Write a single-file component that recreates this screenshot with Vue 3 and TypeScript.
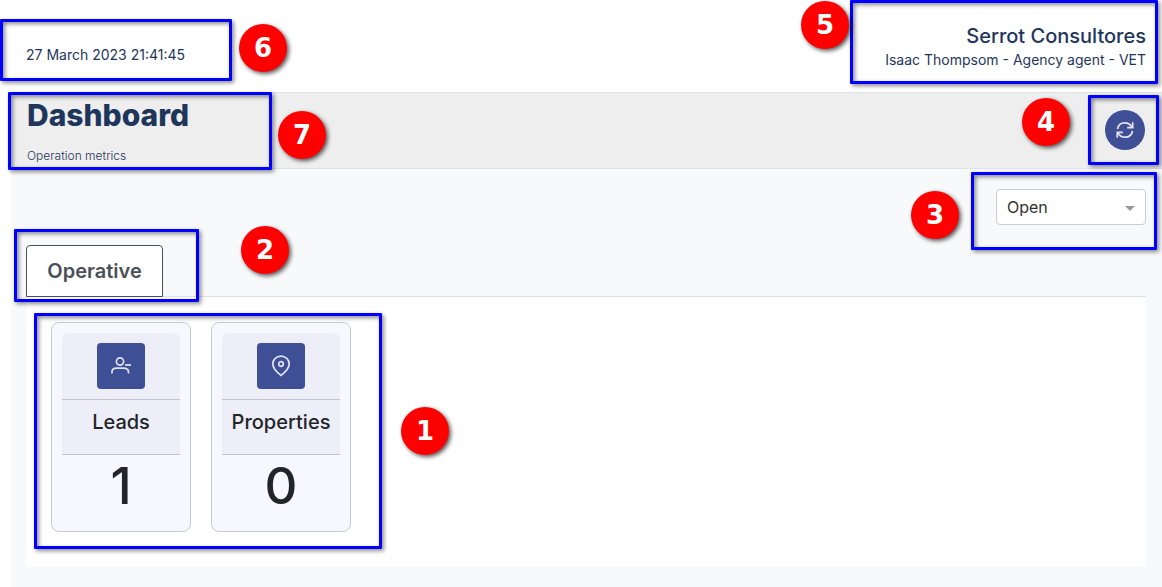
<script setup lang="ts">
import { ref } from 'vue'

interface Metric {
  id: string
  label: string
  value: number
}

const metrics: Metric[] = [
  { id: 'leads', label: 'Leads', value: 1 },
  { id: 'properties', label: 'Properties', value: 0 },
]

const status = ref('open')
</script>

<template>
  <div class="page">
    <header class="topbar">
      <time class="clock" datetime="2023-03-27T21:41:45">27 March 2023 21:41:45</time>
      <div class="account">
        <div class="agency">Serrot Consultores</div>
        <div class="agent">Isaac Thompsom - Agency agent - VET</div>
      </div>
      <div class="frame frame-clock"></div>
      <span class="badge badge-clock">6</span>
      <div class="frame frame-account"></div>
      <span class="badge badge-account">5</span>
    </header>

    <main class="content">
      <section class="hero">
        <div>
          <h1>Dashboard</h1>
          <p>Operation metrics</p>
        </div>
        <button class="refresh" type="button" aria-label="Refresh">
          <svg width="20" height="20" viewBox="0 0 20 20" fill="none" stroke="currentColor" stroke-width="1.7">
            <path d="M2.5 9C3.2 5 6.2 2.8 9.8 2.8C13 2.8 15.5 4.3 17 7.2" />
            <path d="M17.7 2.2V7.7H12.2" />
            <path d="M17.5 11C16.8 15 13.8 17.2 10.2 17.2C7 17.2 4.5 15.7 3 12.8" />
            <path d="M2.3 17.8V12.3H7.8" />
          </svg>
        </button>
        <div class="frame frame-hero"></div>
        <span class="badge badge-hero">7</span>
        <div class="frame frame-refresh"></div>
        <span class="badge badge-refresh">4</span>
      </section>

      <section class="filters">
        <div class="picker">
          <select v-model="status" aria-label="Status">
            <option value="open">Open</option>
            <option value="closed">Closed</option>
          </select>
        </div>
        <div class="frame frame-filter"></div>
        <span class="badge badge-filter">3</span>
      </section>

      <section class="board">
        <nav class="tabs" role="tablist">
          <button class="tab" type="button" role="tab" aria-selected="true">Operative</button>
          <div class="frame frame-tab"></div>
          <span class="badge badge-tab">2</span>
        </nav>
        <div class="panel" role="tabpanel">
          <article v-for="metric in metrics" :key="metric.id" class="card">
            <div class="card-icon">
              <span class="tile">
                <svg v-if="metric.id === 'leads'" width="22" height="20" viewBox="0 0 22 20" fill="none" stroke="currentColor" stroke-width="1.7">
                  <circle cx="10" cy="5.5" r="3.6" />
                  <path d="M2 17.5V16C2 13.3 4.1 12.2 6.3 12.2H13.2C16 12.2 18.5 13.5 18.500 16V17.500" />
                  <path d="M15 9H21" />
                </svg>
                <svg v-else width="20" height="22" viewBox="0 0 20 22" fill="none" stroke="currentColor" stroke-width="1.7">
                  <path d="M10 20.5C7.5 18.5 1.8 14 1.8 9A8.2 7.8 0 0 1 18.2 9C18.2 14 12.5 18.5 10 20.5Z" />
                  <circle cx="10" cy="9" r="2.3" />
                </svg>
              </span>
            </div>
            <h2>{{ metric.label }}</h2>
            <div class="value">{{ metric.value }}</div>
          </article>
          <div class="frame frame-cards"></div>
          <span class="badge badge-cards">1</span>
        </div>
      </section>
    </main>
  </div>
</template>

<style>
body {
  margin: 0;
  background: #fff;
}
</style>

<style scoped>
.page {
  min-height: 100vh;
  display: flex;
  flex-direction: column;
  overflow: hidden;
  font-family: Inter, "Liberation Sans", sans-serif;
  color: #212529;
}
.page, .page * {
  box-sizing: border-box;
}
.topbar {
  position: relative;
  display: flex;
  justify-content: space-between;
  align-items: flex-end;
  min-height: 92px;
  padding: 22px 16px 22px 26px;
  color: #1f365c;
  font-size: 14px;
  line-height: 20px;
}
.clock {
  padding-bottom: 5px;
}
.account {
  text-align: right;
}
.agency {
  font-size: 20px;
  line-height: 28px;
  font-weight: 500;
}
.content {
  flex: 1;
  margin-left: 11px;
  background: #f8f9fb;
}
.hero {
  position: relative;
  display: flex;
  justify-content: space-between;
  align-items: flex-start;
  padding: 0 17px 0 16px;
  min-height: 77px;
  background: #eee;
  border-top: 1px solid #dee2e6;
  border-bottom: 1px solid #dee2e6;
  color: #1f365c;
}
h1 {
  margin: 0;
  font-size: 30px;
  line-height: 44px;
  font-weight: 800;
}
.hero p {
  margin: 9px 0 0;
  font-size: 12px;
  line-height: 20px;
  font-weight: 300;
  color: #1f365c;
}
.refresh {
  display: flex;
  align-items: center;
  justify-content: center;
  width: 40px;
  height: 40px;
  margin-top: 17px;
  padding: 0;
  border: 0;
  border-radius: 50%;
  background: #3f4f95;
  color: #e4e6f2;
}
.filters {
  position: relative;
  display: flex;
  justify-content: flex-end;
  padding: 20px 16px;
}
.picker {
  position: relative;
  width: 150px;
}
.picker::after {
  content: "";
  position: absolute;
  top: 17px;
  right: 11px;
  border: 5px solid transparent;
  border-top-color: #999;
  border-bottom: 0;
  pointer-events: none;
}
.picker select {
  display: block;
  width: 100%;
  height: 36px;
  padding: 0 10px;
  appearance: none;
  border: 1px solid #ccc;
  border-radius: 4px;
  background: #fff;
  color: #333;
  font: 400 16px Inter, "Liberation Sans", sans-serif;
}
.board {
  padding: 0 16px 20px 15px;
}
.tabs {
  position: relative;
  display: flex;
  height: 52px;
  border-bottom: 1px solid #dee2e6;
}
.tab {
  min-width: 137px;
  height: 52px;
  padding: 0 20px;
  border: 1px solid #495057;
  border-radius: 4px 4px 0 0;
  background: #fff;
  color: #495057;
  font: 600 20px Inter, "Liberation Sans", sans-serif;
}
.panel {
  position: relative;
  display: flex;
  gap: 20px;
  align-items: flex-start;
  min-height: 270px;
  padding: 25px;
  background: #fff;
}
.card {
  width: 140px;
  min-height: 210px;
  padding: 10px;
  border: 1px solid #c9c9d3;
  border-radius: 8px;
  background: #f6f7ff;
  text-align: center;
}
.card-icon {
  display: flex;
  justify-content: center;
  padding: 10px 0;
  border-radius: 6px 6px 0 0;
  border-bottom: 1px solid #c4c4cc;
  background: #eeeef8;
}
.tile {
  display: flex;
  align-items: center;
  justify-content: center;
  width: 48px;
  height: 46px;
  border-radius: 4px;
  background: #3f4f95;
  color: #dfe2f1;
}
.card h2 {
  margin: 0;
  padding: 10px 0 20px;
  border-bottom: 1px solid #c4c4cc;
  background: #eeeef8;
  font-size: 20px;
  line-height: 24px;
  font-weight: 500;
}
.value {
  font-size: 51px;
  line-height: 62px;
  font-weight: 500;
}
.frame {
  position: absolute;
  z-index: 1;
  border: 3px solid #00f;
  border-radius: 1px;
  box-shadow: 2px 2px 4px rgba(0, 0, 0, 0.45), inset 2px 2px 4px rgba(0, 0, 0, 0.45);
  pointer-events: none;
}
.badge {
  position: absolute;
  z-index: 2;
  width: 48px;
  height: 48px;
  border-radius: 50%;
  background: #f00;
  box-shadow: 2px 2px 4px rgba(0, 0, 0, 0.65);
  color: #fff;
  font: 700 26px/48px "DejaVu Sans", sans-serif;
  text-align: center;
}
.frame-clock { left: 0; top: 19px; width: 232px; height: 62px; }
.badge-clock { left: 239px; top: 24px; }
.frame-account { right: 4px; top: 0; width: 308px; height: 84px; }
.badge-account { right: 313px; top: 1px; }
.frame-hero { left: -3px; top: -1px; width: 264px; height: 78px; }
.badge-hero { left: 267px; top: 18px; }
.frame-refresh { right: 3px; top: 2px; width: 71px; height: 70px; }
.badge-refresh { right: 92px; top: 5px; }
.frame-filter { right: 5px; top: 3px; width: 186px; height: 78px; }
.badge-filter { right: 203px; top: 22px; }
.frame-tab { left: -12px; top: -16px; width: 185px; height: 73px; }
.badge-tab { left: 215px; top: -19px; }
.frame-cards { left: 8px; top: 16px; width: 348px; height: 236px; }
.badge-cards { left: 375px; top: 110px; }
</style>
